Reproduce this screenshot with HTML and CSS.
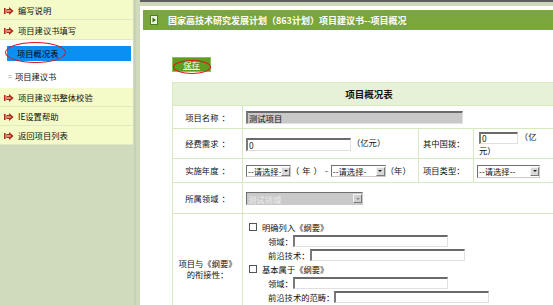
FILE: index.html
```html
<!DOCTYPE html>
<html lang="zh-CN">
<head>
<meta charset="utf-8">
<title>项目概况表</title>
<link rel="stylesheet" href="styles.css">
</head>
<body>
<div class="page">
  <aside class="side">
    <div class="side-col">
      <ul class="menu">
        <li class="item"><svg class="ico" viewBox="0 0 10 8"><rect x="0" y="1" width="1.6" height="6" fill="#b02a1c"/><polygon points="2.4,2 5,2 5,0 9.6,4 5,8 5,6 2.4,6" fill="#b02a1c"/><rect x="3" y="3.4" width="3.6" height="1.2" fill="#f4dcb8"/></svg>编写说明</li>
        <li class="item"><svg class="ico" viewBox="0 0 10 8"><rect x="0" y="1" width="1.6" height="6" fill="#b02a1c"/><polygon points="2.4,2 5,2 5,0 9.6,4 5,8 5,6 2.4,6" fill="#b02a1c"/><rect x="3" y="3.4" width="3.6" height="1.2" fill="#f4dcb8"/></svg>项目建议书填写</li>
      </ul>
      <div class="sub">
        <div class="sub-item active"><span class="ring ring-side"></span>项目概况表</div>
        <div class="sub-item"><span class="eq">=</span>项目建议书</div>
      </div>
      <ul class="menu">
        <li class="item short"><svg class="ico" viewBox="0 0 10 8"><rect x="0" y="1" width="1.6" height="6" fill="#b02a1c"/><polygon points="2.4,2 5,2 5,0 9.6,4 5,8 5,6 2.4,6" fill="#b02a1c"/><rect x="3" y="3.4" width="3.6" height="1.2" fill="#f4dcb8"/></svg>项目建议书整体校验</li>
        <li class="item short"><svg class="ico" viewBox="0 0 10 8"><rect x="0" y="1" width="1.6" height="6" fill="#b02a1c"/><polygon points="2.4,2 5,2 5,0 9.6,4 5,8 5,6 2.4,6" fill="#b02a1c"/><rect x="3" y="3.4" width="3.6" height="1.2" fill="#f4dcb8"/></svg>IE设置帮助</li>
        <li class="item short"><svg class="ico" viewBox="0 0 10 8"><rect x="0" y="1" width="1.6" height="6" fill="#b02a1c"/><polygon points="2.4,2 5,2 5,0 9.6,4 5,8 5,6 2.4,6" fill="#b02a1c"/><rect x="3" y="3.4" width="3.6" height="1.2" fill="#f4dcb8"/></svg>返回项目列表</li>
      </ul>
    </div>
  </aside>
  <main class="main">
    <div class="topbar"></div>
    <div class="title">
      <svg class="title-ico" viewBox="0 0 8 10"><rect x="0.5" y="0.5" width="7" height="9" fill="#eef4e2" stroke="#4f7d22"/><polygon points="2.5,2.5 6,5 2.5,7.5" fill="#3f6a18"/></svg>
      <span>国家高技术研究发展计划（863计划）项目建议书--项目概况</span>
    </div>
    <div class="toolbar">
      <a class="save" href="#">保存<span class="ring ring-save"></span></a>
    </div>
    <table class="form">
      <colgroup><col class="c1"><col class="c2"><col class="c3"><col class="c4"></colgroup>
      <tr class="r-head"><th colspan="4">项目概况表</th></tr>
      <tr class="r1">
        <td class="lbl">项目名称<span class="colon">：</span></td>
        <td colspan="3"><input class="inp inp-name" type="text" value="测试项目"></td>
      </tr>
      <tr class="r2">
        <td class="lbl">经费需求<span class="colon">：</span></td>
        <td><input class="inp inp-fee" type="text" value="0"><span class="unit">（亿元）</span></td>
        <td class="lbl2">其中国拨：</td>
        <td class="wrap"><input class="inp inp-gb" type="text" value="0"> （亿元）</td>
      </tr>
      <tr class="r3">
        <td class="lbl">实施年度<span class="colon">：</span></td>
        <td><span class="sel sel-y1"><span class="sel-txt">--请选择-</span><span class="sel-btn"></span></span><span class="yr">（年）-</span><span class="sel sel-y2"><span class="sel-txt">--请选择-</span><span class="sel-btn"></span></span><span class="yr2">（年）</span></td>
        <td class="lbl2">项目类型：</td>
        <td><span class="sel sel-type"><span class="sel-txt">--请选择--</span><span class="sel-btn"></span></span></td>
      </tr>
      <tr class="r4">
        <td class="lbl">所属领域<span class="colon">：</span></td>
        <td colspan="3"><span class="sel sel-dis"><span class="sel-txt">测试领域</span><span class="sel-btn"></span></span></td>
      </tr>
      <tr class="r5">
        <td class="lbl lbl-link">项目与《纲要》<br>的衔接性：</td>
        <td colspan="3" class="link">
          <div class="ln"><span class="chk"></span>明确列入《纲要》</div>
          <div class="ln ind">领域：<input class="inp inp-long" type="text"></div>
          <div class="ln ind">前沿技术：<input class="inp inp-long" type="text"></div>
          <div class="ln"><span class="chk"></span>基本属于《纲要》</div>
          <div class="ln ind">领域：<input class="inp inp-long" type="text"></div>
          <div class="ln ind">前沿技术的范畴：<input class="inp inp-long" type="text"></div>
        </td>
      </tr>
    </table>
  </main>
</div>
</body>
</html>
```

FILE: styles.css
```css
html, body {
  margin: 0;
  padding: 0;
  background: #ffffff;
}
body {
  font-family: "Noto Sans CJK SC", "Noto Sans", sans-serif;
  font-size: 8.3px;
  color: #111;
  overflow: hidden;
}
.page {
  display: flex;
  width: 553px;
  height: 305px;
  overflow: hidden;
}

/* sidebar */
.side {
  width: 140px;
  flex: none;
  background: #d0dbbe;
  display: flex;
}
.side-col {
  width: 134px;
  border-right: 2px solid #c7d1b4;
}
.menu {
  list-style: none;
  margin: 0;
  padding: 0;
  background: #f4fbc8;
  width: 133px;
}
.item {
  height: 17px;
  padding-top: 2px;
  border-bottom: 1px solid #e2eac4;
  display: flex;
  align-items: center;
  padding-left: 4px;
  line-height: 1;
}
.item.short {
  height: 17px;
  padding-top: 1px;
}
.ico {
  width: 10px;
  height: 8px;
  margin-right: 4px;
  flex: none;
}
.sub {
  background: #ffffff;
  width: 133px;
  height: 48px;
  padding-top: 6px;
  box-sizing: border-box;
}
.sub-item {
  height: 15px;
  display: flex;
  align-items: center;
  line-height: 1;
}
.sub-item.active {
  position: relative;
  background: #0c8ff2;
  margin-left: 7px;
  width: 124px;
  padding-left: 10px;
  box-sizing: border-box;
  color: #000;
}
.sub-item + .sub-item {
  margin-top: 8px;
  padding-left: 8px;
}
.eq {
  color: #9a9a9a;
  margin-right: 3px;
  font-size: 7px;
}
.ring {
  position: absolute;
  border: 1.5px solid #e0141c;
  border-radius: 50%;
  box-sizing: border-box;
}
.ring-side {
  left: -2px;
  top: -4px;
  width: 61px;
  height: 21px;
}

/* main */
.main {
  flex: 1;
  min-width: 0;
  overflow: hidden;
}
.topbar {
  height: 4px;
  border-top: 2px solid #5e5e5e;
  background: #cdd8bb;
}
.title {
  margin: 4px 0 0 3px;
  height: 20px;
  background: #7aa63e;
  color: #ffffff;
  font-weight: bold;
  font-size: 9px;
  display: flex;
  align-items: center;
  padding-left: 7px;
  white-space: nowrap;
}
.title-ico {
  width: 8px;
  height: 10px;
  margin-right: 10px;
  flex: none;
}
.toolbar {
  padding: 27px 0 0 32px;
  height: 15px;
}
.save {
  position: relative;
  display: inline-flex;
  align-items: center;
  justify-content: center;
  width: 39px;
  height: 15px;
  box-sizing: border-box;
  background: #5d9d1f;
  border: 1px solid #8dbf5a;
  color: #fbffe8;
  text-decoration: underline;
  line-height: 1;
}
.ring-save {
  left: 0;
  top: 2px;
  width: 38px;
  height: 14px;
}

/* form table */
.form {
  margin: 10px 0 0 32px;
  width: 390px;
  table-layout: fixed;
  border-collapse: collapse;
}
.c1 { width: 70px; }
.c2 { width: 176px; }
.c3 { width: 55px; }
.c4 { width: 89px; }
.form th, .form td {
  border: 1px solid #d6e9c0;
  padding: 0 0 0 3px;
  vertical-align: middle;
  font-weight: normal;
  line-height: 13px;
  white-space: nowrap;
}
.form th {
  background: #e7f1d7;
  font-weight: bold;
  font-size: 9.5px;
  text-align: center;
  height: 22px;
  color: #111;
}
.r1 td { height: 22px; }
.r2 td { height: 29px; }
.r3 td { height: 23px; }
.r4 td { height: 30px; }
.form td.lbl {
  text-align: center;
  padding: 0;
}
.colon {
  margin-left: 3px;
}
.form td.lbl2 {
  padding-left: 4px;
}
.form td.wrap {
  white-space: normal;
  padding: 0 20px 0 5px;
}
.form td.lbl-link {
  padding-top: 12px;
  line-height: 11px;
}

.inp {
  box-sizing: border-box;
  height: 13px;
  margin: 0;
  padding: 0 1px;
  border-style: solid;
  border-width: 2px 1px 1px 2px;
  border-color: #6a6a6a #e0e0e0 #e0e0e0 #7a7a7a;
  background: #ffffff;
  font-family: inherit;
  font-size: 8.3px;
  line-height: 9px;
  color: #111;
  vertical-align: middle;
  outline: none;
}
.inp-name {
  width: 217px;
  background: #c8c8c8;
}
.inp-fee {
  width: 105px;
}
.inp-gb {
  width: 39px;
  height: 12px;
}
.inp-long {
  width: 155px;
  height: 12px;
}
.unit {
  margin-left: 1px;
}

.sel {
  display: inline-flex;
  align-items: center;
  box-sizing: border-box;
  height: 12px;
  border: 1px solid #6f6f6f;
  border-right-color: #c9c9c9;
  border-bottom-color: #c9c9c9;
  background: #ffffff;
  vertical-align: middle;
  overflow: hidden;
}
.sel-txt {
  flex: 1;
  min-width: 0;
  white-space: nowrap;
  line-height: 10px;
  padding-left: 1px;
}
.sel-btn {
  flex: none;
  width: 9px;
  height: 9px;
  box-sizing: border-box;
  background: #d8d8d8;
  border: 1px solid;
  border-color: #f4f4f4 #7a7a7a #7a7a7a #f4f4f4;
  position: relative;
}
.sel-btn::after {
  content: "";
  position: absolute;
  left: 1.5px;
  top: 2.5px;
  border-left: 2px solid transparent;
  border-right: 2px solid transparent;
  border-top: 2px solid #222;
}
.sel-y1 { width: 45px; }
.sel-y2 { width: 55px; }
.sel-type { width: 63px; height: 13px; }
.sel-dis {
  width: 117px;
  height: 13px;
  background: #c9c9c9;
  color: #ececec;
}
.sel-dis .sel-btn {
  background: #d0d0d0;
}
.sel-dis .sel-btn::after {
  border-top-color: #8a8a8a;
}
.yr {
  letter-spacing: 3px;
}

.form td.link {
  padding: 6px 0 8px 6px;
}
.ln {
  height: 14px;
  display: flex;
  align-items: center;
}
.ln.ind {
  padding-left: 19px;
}
.chk {
  width: 8px;
  height: 8px;
  box-sizing: border-box;
  border: 1px solid #555;
  background: #fff;
  margin-right: 5px;
  flex: none;
}
```
